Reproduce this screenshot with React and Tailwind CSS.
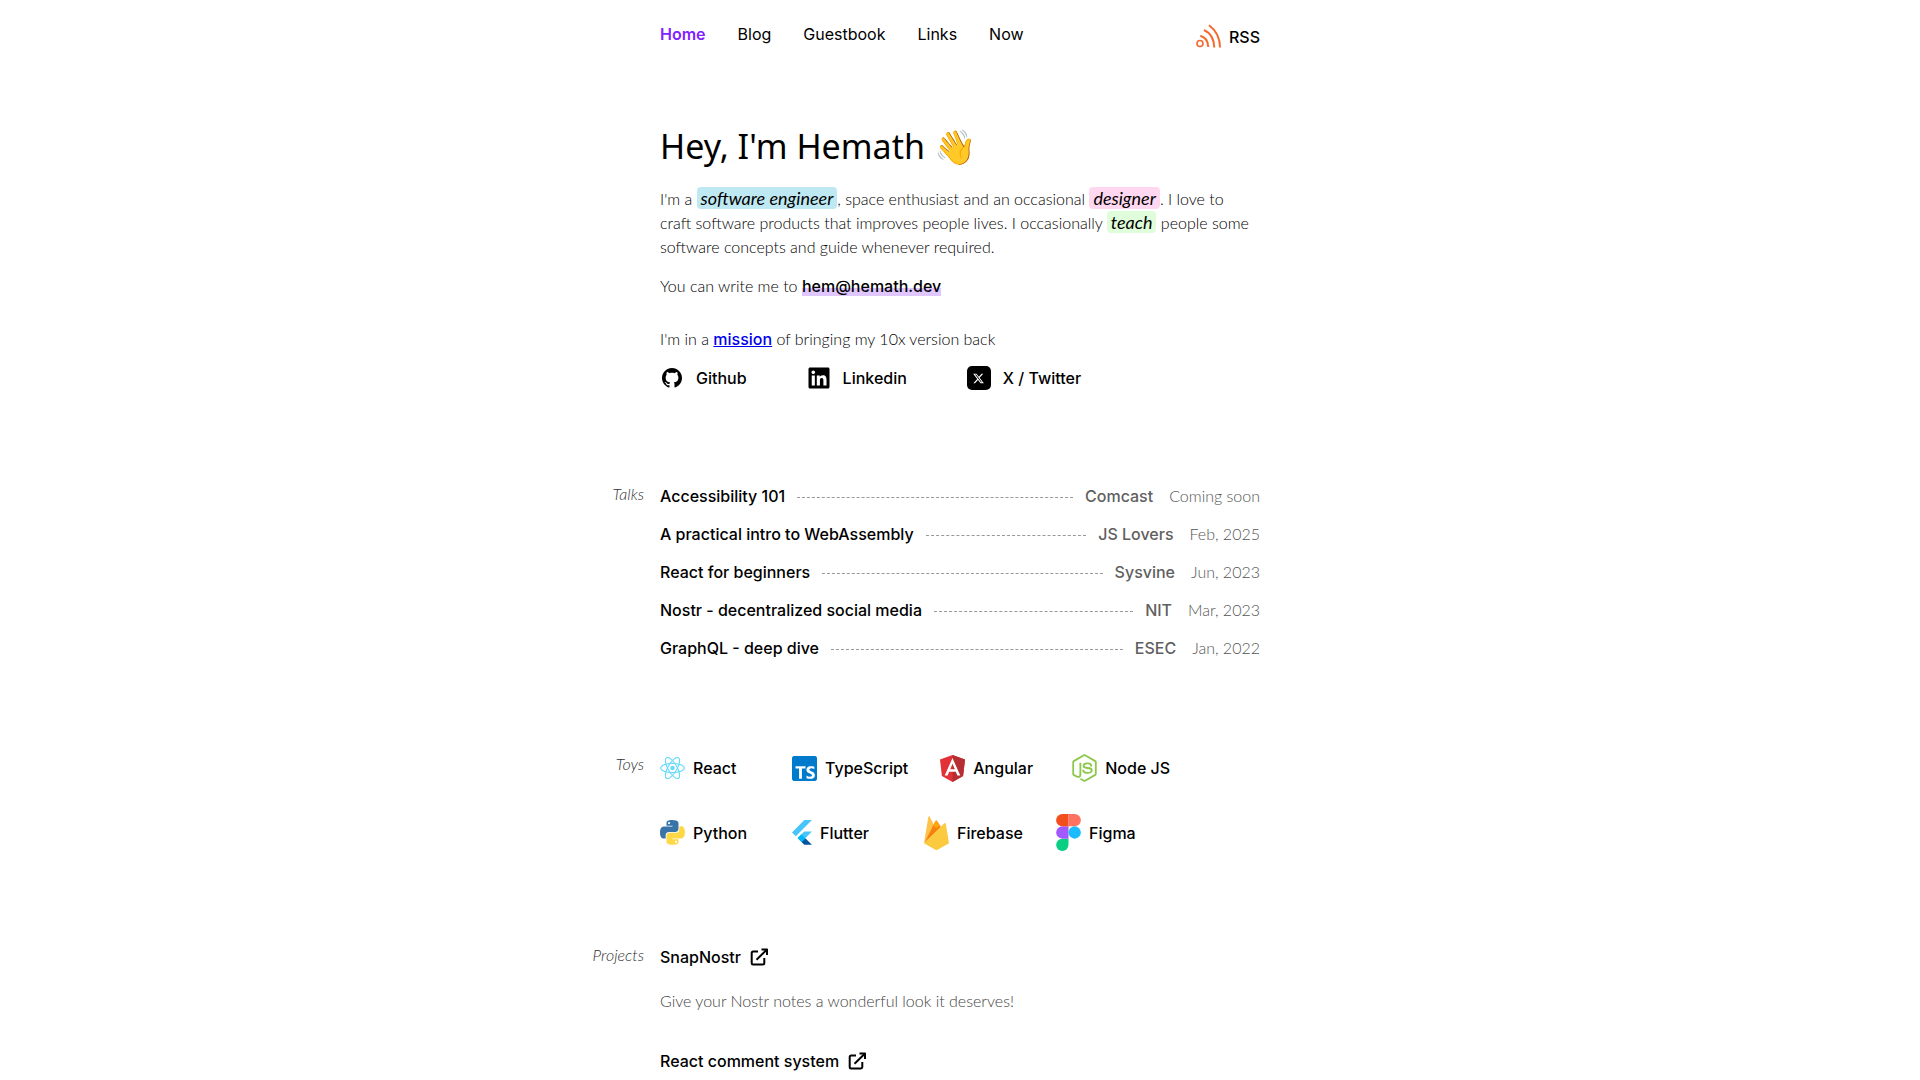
import React from 'react';
import { FaLinkedin, FaNodeJs } from 'react-icons/fa';
import { RiGithubFill, RiTwitterXFill } from 'react-icons/ri';
import { SiTypescript } from 'react-icons/si';

const navLinks = ['Home', 'Blog', 'Guestbook', 'Links', 'Now'];

const talks = [
  { title: 'Accessibility 101', org: 'Comcast', date: 'Coming soon' },
  { title: 'A practical intro to WebAssembly', org: 'JS Lovers', date: 'Feb, 2025' },
  { title: 'React for beginners', org: 'Sysvine', date: 'Jun, 2023' },
  { title: 'Nostr - decentralized social media', org: 'NIT', date: 'Mar, 2023' },
  { title: 'GraphQL - deep dive', org: 'ESEC', date: 'Jan, 2022' },
];

const RssIcon = () => (
  <svg width="25" height="25" viewBox="0 0 25 25" fill="none" stroke="#f26a2e" strokeWidth="2">
    <circle cx="4" cy="19.5" r="3" strokeWidth="1.6" />
    <path d="M4.3 11.8Q12 14 12.3 23" />
    <path d="M8 6Q18 10.5 18.3 23.6" />
    <path d="M13 1.2Q24 9 24 23.6" />
  </svg>
);

const ExternalLinkIcon = () => (
  <svg width="24" height="24" viewBox="0 0 24 24" fill="none" stroke="#000" strokeWidth="2" strokeLinejoin="round">
    <path d="M11 6.5H6.2A1.5 1.5 0 0 0 4.7 8v10a1.5 1.5 0 0 0 1.5 1.5h9.6a1.5 1.5 0 0 0 1.5-1.5v-5" />
    <path d="M9.5 14.7 20 4.5" />
    <path d="M14.5 4.6H20V10" />
  </svg>
);

const ReactIcon = () => (
  <svg width="25" height="22" viewBox="-11.5 -10.23 23 20.46">
    <circle r="2.05" fill="#61dafb" />
    <g stroke="#61dafb" fill="none">
      <ellipse rx="11" ry="4.2" />
      <ellipse rx="11" ry="4.2" transform="rotate(60)" />
      <ellipse rx="11" ry="4.2" transform="rotate(120)" />
    </g>
  </svg>
);

const AngularIcon = () => (
  <svg width="25" height="27" viewBox="31.9 30 186.2 200">
    <path fill="#e23237" d="M125 30 31.9 63.2 46.1 186.3 125 230l78.9-43.7 14.2-123.1z" />
    <path fill="#b52e31" d="M125 30v200l78.9-43.7 14.2-123.1z" />
    <path fill="#fff" d="M125 52.1 66.8 182.6h21.7l11.7-29.2h49.4l11.7 29.2H183zM142 135.4h-34l17-40.9z" />
  </svg>
);

const PythonIcon = () => (
  <svg width="25" height="25" viewBox="0 0 256 255">
    <path
      fill="#3874a8"
      d="M126.916.072c-64.832 0-60.784 28.115-60.784 28.115l.072 29.128h61.868v8.745H41.631S.145 61.355.145 126.77c0 65.417 36.21 63.097 36.21 63.097h21.61v-30.356s-1.165-36.21 35.632-36.21h61.362s34.475.557 34.475-33.319V33.97S194.67.072 126.916.072zM92.802 19.66a11.12 11.12 0 0 1 11.13 11.13 11.12 11.12 0 0 1-11.13 11.13 11.12 11.12 0 0 1-11.13-11.13 11.12 11.12 0 0 1 11.13-11.13z"
    />
    <path
      fill="#ffd845"
      d="M128.757 254.126c64.832 0 60.784-28.115 60.784-28.115l-.072-29.127H127.6v-8.745h86.441s41.486 4.705 41.486-60.712c0-65.416-36.21-63.096-36.21-63.096h-21.61v30.355s1.165 36.21-35.632 36.21h-61.362s-34.475-.557-34.475 33.32v56.013s-5.235 33.897 62.518 33.897zm34.114-19.586a11.12 11.12 0 0 1-11.13-11.13 11.12 11.12 0 0 1 11.13-11.131 11.12 11.12 0 0 1 11.13 11.13 11.12 11.12 0 0 1-11.13 11.13z"
    />
  </svg>
);

const FlutterIcon = () => (
  <svg width="20" height="25" viewBox="0 0 256 317">
    <path fill="#47c5fb" d="M157.666 0 0 157.666l48.8 48.8L255.268 0z" />
    <path fill="#47c5fb" d="m156.567 145.397-84.418 84.418 48.983 49.715 48.71-48.71 85.426-85.423z" />
    <path fill="#00569e" d="m121.133 279.53 37.081 37.081h97.054l-85.426-85.792z" />
    <path fill="#00b5f8" d="m71.6 230.364 48.801-48.802 49.441 49.258-48.709 48.711z" />
  </svg>
);

const FirebaseIcon = () => (
  <svg width="25" height="34" viewBox="0 0 25 34">
    <path fill="#ffc24a" d="M0 27.3 4.4.8Q4.9 0 5.6.6L10 9z" />
    <path fill="#f6820c" d="M0 27.3 11.7 4.8q.6-.8 1.2 0L17 11z" />
    <path fill="#ffa50e" d="m9.3 9.4 2.4-4.6q.6-.8 1.2 0L15.5 10l-3.5 2z" />
    <path fill="#fcca3f" d="M0 27.3 20.6 7.1q.8-.5 1.1.4L25 27.3l-11.4 6.4q-1 .6-2.2 0z" />
  </svg>
);

const FigmaIcon = () => (
  <svg width="25" height="37" viewBox="0 0 200 300">
    <path fill="#0acf83" d="M50 300a50 50 0 0 0 50-50v-50H50a50 50 0 0 0 0 100z" />
    <path fill="#a259ff" d="M0 150a50 50 0 0 1 50-50h50v100H50a50 50 0 0 1-50-50z" />
    <path fill="#f24e1e" d="M0 50A50 50 0 0 1 50 0h50v100H50A50 50 0 0 1 0 50z" />
    <path fill="#ff7262" d="M100 0h50a50 50 0 0 1 0 100h-50z" />
    <circle fill="#1abcfe" cx="150" cy="150" r="50" />
  </svg>
);

const toyRows = [
  [
    { name: 'React', icon: <ReactIcon /> },
    { name: 'TypeScript', icon: <SiTypescript className="h-[25px] w-[25px] rounded-xs text-[#007acc]" /> },
    { name: 'Angular', icon: <AngularIcon /> },
    { name: 'Node JS', icon: <FaNodeJs className="h-7 w-[25px] text-[#8cc84b]" /> },
  ],
  [
    { name: 'Python', icon: <PythonIcon /> },
    { name: 'Flutter', icon: <FlutterIcon /> },
    { name: 'Firebase', icon: <FirebaseIcon /> },
    { name: 'Figma', icon: <FigmaIcon /> },
  ],
];

const Section = ({ label, children }) => (
  <section className="mt-[94px] grid grid-cols-[1fr_minmax(0,600px)_1fr]">
    <h2 className="justify-self-end pr-4 font-[Lato,sans-serif] text-base leading-5 font-light text-[#333] italic">
      {label}
    </h2>
    <div>{children}</div>
  </section>
);

const Pill = ({ className, children }) => (
  <span className={`rounded px-1 font-[Lato,sans-serif] text-lg leading-5 font-normal text-black italic ${className}`}>
    {children}
  </span>
);

const Project = ({ name }) => (
  <a href="#" className="flex w-fit items-center gap-1.5 font-medium">
    {name}
    <ExternalLinkIcon />
  </a>
);

const App = () => {
  return (
    <div className="bg-white font-[Inter,sans-serif] text-base leading-6 text-black">
      <header className="mx-auto flex max-w-[600px] items-start justify-between pt-6">
        <nav className="flex gap-8 leading-5">
          {navLinks.map((link) => (
            <a key={link} href="#" className={link === 'Home' ? 'font-semibold text-[#7f22fe]' : 'font-normal'}>
              {link}
            </a>
          ))}
        </nav>
        <a href="#" className="flex items-center gap-2 font-medium">
          <RssIcon />
          RSS
        </a>
      </header>

      <main>
        <div className="mx-auto max-w-[600px] pt-[77px]">
          <h1 className="font-['Noto_Sans',sans-serif] text-[34px] leading-10 font-normal">Hey, I'm Hemath 👋</h1>
          <div className="font-[Lato,sans-serif] font-light">
            <p className="mt-[21px]">
              I'm a <Pill className="bg-[#bfe9f2]">software engineer</Pill>, space enthusiast and an occasional{' '}
              <Pill className="bg-[#ffd7f0]">designer</Pill>. I love to
              <br />
              craft software products that improves people lives. I occasionally{' '}
              <Pill className="bg-[#dffddb]">teach</Pill> people some
              <br />
              software concepts and guide whenever required.
            </p>
            <p className="mt-[15px]">
              You can write me to{' '}
              <a
                href="mailto:hem@hemath.dev"
                className="bg-linear-to-b from-transparent from-60% to-[#dfc6ff] to-60% font-[Inter,sans-serif] font-medium"
              >
                hem@hemath.dev
              </a>
            </p>
            <p className="mt-[29px]">
              I'm in a{' '}
              <a href="#" className="font-[Inter,sans-serif] font-medium text-[#0000ee] underline">
                mission
              </a>{' '}
              of bringing my 10x version back
            </p>
          </div>
          <div className="mt-[15px] flex gap-[60px] font-medium">
            <a href="#" className="flex items-center gap-3">
              <RiGithubFill size={24} />
              Github
            </a>
            <a href="#" className="flex items-center gap-3">
              <FaLinkedin size={24} />
              Linkedin
            </a>
            <a href="#" className="flex items-center gap-3">
              <span className="flex h-6 w-6 items-center justify-center rounded-[5px] bg-black text-white">
                <RiTwitterXFill size={13} />
              </span>
              X / Twitter
            </a>
          </div>
        </div>

        <Section label="Talks">
          <ul className="flex flex-col gap-3.5">
            {talks.map((talk) => (
              <li key={talk.title} className="flex items-center">
                <a href="#" className="font-medium">
                  {talk.title}
                </a>
                <span className="mx-3 mt-0.5 flex-1 border-t border-dashed border-[#999]" />
                <span className="font-medium text-[#5f5f5f]">{talk.org}</span>
                <span className="ml-4 font-[Lato,sans-serif] font-light text-[#555]">{talk.date}</span>
              </li>
            ))}
          </ul>
        </Section>

        <Section label="Toys">
          <div className="flex flex-col gap-8">
            {toyRows.map((row, index) => (
              <ul key={index} className="flex gap-8">
                {row.map((toy) => (
                  <li key={toy.name} className="flex min-w-[100px] items-center gap-2 font-medium">
                    {toy.icon}
                    {toy.name}
                  </li>
                ))}
              </ul>
            ))}
          </div>
        </Section>

        <Section label="Projects">
          <Project name="SnapNostr" />
          <p className="mt-5 mb-9 font-[Lato,sans-serif] font-light text-[#444]">
            Give your Nostr notes a wonderful look it deserves!
          </p>
          <Project name="React comment system" />
        </Section>
      </main>
    </div>
  );
};

export default App;
